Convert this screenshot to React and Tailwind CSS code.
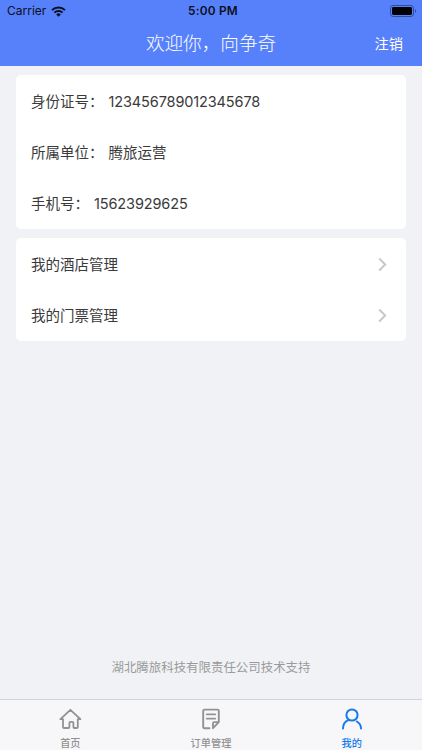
import React from "react";

const profile = [
  { label: "身份证号：", value: "123456789012345678", digits: true },
  { label: "所属单位：", value: "腾旅运营" },
  { label: "手机号：", value: "15623929625", digits: true },
];

const links = ["我的酒店管理", "我的门票管理"];

function WifiIcon() {
  return (
    <svg width="15" height="11" viewBox="0 0 15 11" fill="none" stroke="#0b1020">
      <path d="M1 4.1a9.3 9.3 0 0 1 13 0" strokeWidth="2" />
      <path d="M3.4 6.7a5.8 5.8 0 0 1 8.2 0" strokeWidth="1.9" />
      <path d="M5.2 8.4a3.3 3.3 0 0 1 4.6 0L7.5 10.7z" fill="#0b1020" stroke="none" />
    </svg>
  );
}

function BatteryIcon() {
  return (
    <svg width="27" height="12" viewBox="0 0 27 12" fill="none">
      <rect x="0.5" y="0.5" width="23" height="11" rx="2.6" stroke="#263b7c" strokeOpacity="0.75" />
      <rect x="2" y="2" width="20" height="8" rx="1.4" fill="#000" />
      <path d="M25 4.2c1.6.5 1.6 3.1 0 3.6z" fill="#263b7c" fillOpacity="0.75" />
    </svg>
  );
}

function HomeIcon() {
  return (
    <svg width="24" height="24" viewBox="0 0 24 24" fill="none" stroke="currentColor" strokeWidth="1.8" strokeLinecap="round" strokeLinejoin="round">
      <path d="M2.4 12.2 12.4 2.8l10 9.4h-2.6v7.8q0 1-1 1h-2.4q-1 0-1-1v-4.2q0-1-1-1h-2q-1 0-1 1v4.2q0 1-1 1H6q-1 0-1-1v-7.8z" />
    </svg>
  );
}

function OrderIcon() {
  return (
    <svg width="24" height="24" viewBox="0 0 24 24" fill="none" stroke="currentColor" strokeWidth="1.9" strokeLinecap="round" strokeLinejoin="round">
      <path d="M10.5 21.2h-5q-1.3 0-1.3-1.3V3.9q0-1.3 1.3-1.3h13q1.3 0 1.3 1.3v11.2l-5.8 6.1v-4.8q0-1.3 1.3-1.3h4.5" />
      <path d="M7.8 7.4h8.4M7.8 11.6h8.4" />
    </svg>
  );
}

function UserIcon() {
  return (
    <svg width="24" height="24" viewBox="0 0 24 24" fill="none" stroke="currentColor" strokeWidth="2" strokeLinecap="round">
      <circle cx="12" cy="8" r="5.6" />
      <path d="M3 21.6c0-4.1 2-7 5.3-8.4M16.8 14.5c2.7 1.5 4.2 3.9 4.2 7.1" />
    </svg>
  );
}

const tabs = [
  { label: "首页", icon: HomeIcon },
  { label: "订单管理", icon: OrderIcon },
  { label: "我的", icon: UserIcon, active: true },
];

export default function App() {
  return (
    <div className="flex h-[750px] w-full flex-col overflow-hidden bg-[#f0f2f5] font-['Inter','Noto_Sans_CJK_SC',sans-serif] text-[#3a3a3a]">
      {/* Header */}
      <header className="h-[65.5px] shrink-0 bg-[#5781fb]">
        <div className="grid h-[22px] grid-cols-3 items-center pr-[5px] pl-[7px] text-[#0b1020]">
          <div className="flex items-center gap-[5px] text-[12px]">
            Carrier <WifiIcon />
          </div>
          <span className="pt-[2px] pl-[2px] text-center text-[11.8px] font-semibold tracking-[0.25px]">5:00 PM</span>
          <div className="flex justify-end">
            <BatteryIcon />
          </div>
        </div>
        <div className="grid h-[43px] grid-cols-[1fr_auto_1fr] items-center px-[19px] text-white">
          <span />
          <h1 className="text-[18.6px] leading-none font-light">欢迎你，向争奇</h1>
          <button className="justify-self-end pt-px text-[14.2px] leading-none">注销</button>
        </div>
      </header>

      {/* Account */}
      <main className="flex flex-1 flex-col px-4 pt-[9.5px] text-[14.5px]">
        <section className="rounded-[5px] bg-white">
          {profile.map((item) => (
            <div key={item.label} className="flex h-[51.2px] items-center gap-[5px] px-[15px] pt-[2px]">
              <span>{item.label}</span>
              <span className={item.digits ? "tracking-[-0.12px]" : ""}>{item.value}</span>
            </div>
          ))}
        </section>

        <section className="mt-[9.4px] rounded-[5px] bg-white pb-[0.5px]">
          {links.map((label) => (
            <button key={label} className="flex h-[51.2px] w-full items-center justify-between pt-[2px] pr-[19px] pl-[15px]">
              {label}
              <svg width="9" height="14" viewBox="0 0 9 14" fill="none" stroke="#c7c7cc" strokeWidth="2">
                <path d="M1.2 .5 7.2 6.5l-6 6" />
              </svg>
            </button>
          ))}
        </section>

        <p className="mt-auto mb-[21px] text-center text-[12.45px] leading-5 text-[#9a9a9a]">
          湖北腾旅科技有限责任公司技术支持
        </p>
      </main>

      {/* Tab bar */}
      <nav className="grid h-[51px] shrink-0 grid-cols-3 border-t border-[#d2d3d6] bg-[#f7f7fa]">
        {tabs.map(({ label, icon: Icon, active }) => (
          <button
            key={label}
            className={`flex flex-col items-center pt-[7px] text-[10.2px] font-medium ${active ? "text-[#167aea]" : "text-[#929292]"}`}
          >
            <Icon />
            <span className="mt-[5px] leading-[14px]">{label}</span>
          </button>
        ))}
      </nav>
    </div>
  );
}
